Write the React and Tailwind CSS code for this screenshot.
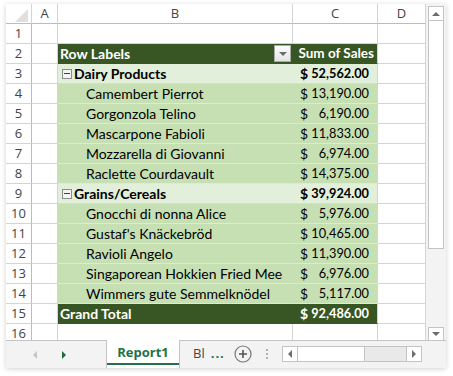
const rows = [
  { kind: 'head', label: 'Row Labels', value: 'Sum of Sales' },
  { kind: 'group', label: 'Dairy Products', value: '52,562.00' },
  { kind: 'item', label: 'Camembert Pierrot', value: '13,190.00' },
  { kind: 'item', label: 'Gorgonzola Telino', value: '6,190.00' },
  { kind: 'item', label: 'Mascarpone Fabioli', value: '11,833.00' },
  { kind: 'item', label: 'Mozzarella di Giovanni', value: '6,974.00' },
  { kind: 'item', label: 'Raclette Courdavault', value: '14,375.00' },
  { kind: 'group', label: 'Grains/Cereals', value: '39,924.00' },
  { kind: 'item', label: 'Gnocchi di nonna Alice', value: '5,976.00' },
  { kind: 'item', label: "Gustaf's Knäckebröd", value: '10,465.00' },
  { kind: 'item', label: 'Ravioli Angelo', value: '11,390.00' },
  { kind: 'item', label: 'Singaporean Hokkien Fried Mee', value: '6,976.00' },
  { kind: 'item', label: 'Wimmers gute Semmelknödel', value: '5,117.00' },
  { kind: 'total', label: 'Grand Total', value: '92,486.00' },
];

const rowBg = {
  head: 'bg-[#375623] text-white font-bold border-b-[#375623]',
  group: 'bg-[#e2efda] text-black font-bold border-b-[#d0e4c2]',
  item: 'bg-[#c6e0b4] text-black border-b-[#ddebd2]',
  total: 'bg-[#375623] text-white font-bold border-b-[#375623]',
};

const hdr = "font-['Open_Sans',sans-serif] text-[13px] text-[#444]";
const cellFont = "font-['Lato','Liberation_Sans',sans-serif] text-[14px] whitespace-nowrap";

function Tri({ dir, color = '#6d6d6d' }) {
  const pts = {
    up: '0,4 4,0 8,4',
    down: '0,0 8,0 4,4',
    left: '4,0 0,4 4,8',
    right: '0,0 4,4 0,8',
  }[dir];
  const vertical = dir === 'up' || dir === 'down';
  return (
    <svg width={vertical ? 8 : 4} height={vertical ? 4 : 8} viewBox={vertical ? '0 0 8 4' : '0 0 4 8'}>
      <polygon points={pts} fill={color} />
    </svg>
  );
}

function RowHead({ n }) {
  return (
    <div className={`flex h-5 items-center justify-center overflow-hidden border-b border-r border-[#d4d4d4] border-r-[#bcbcbc] ${hdr}`}>{n}</div>
  );
}

function Blank() {
  return <div className="h-5 border-b border-r border-[#d4d4d4]" />;
}

function Minus() {
  return (
    <span className="mr-[2px] inline-flex h-[10px] w-[10px] items-center justify-center border border-[#8c8c8c] bg-[#f4f4f4]">
      <span className="h-px w-[6px] bg-[#404040]" />
    </span>
  );
}

function PivotRow({ row, n }) {
  const bg = rowBg[row.kind];
  return (
    <>
      <RowHead n={n} />
      <Blank />
      <div className={`flex h-5 items-center border-b border-r border-r-transparent ${bg} ${cellFont}`}>
        {row.kind === 'group' && <span className="ml-1 flex items-center"><Minus /></span>}
        <span className={row.kind === 'item' ? 'pl-7' : row.kind === 'group' ? '' : 'pl-[2px]'}>{row.label}</span>
        {row.kind === 'head' && (
          <span className="ml-auto mr-px flex h-[17px] w-[17px] items-center justify-center border border-[#a9a9a9] bg-gradient-to-b from-[#fdfdfd] to-[#e4e4e4]">
            <Tri dir="down" />
          </span>
        )}
      </div>
      <div className={`flex h-5 items-center border-b border-r border-r-[#d4d4d4] ${bg} ${cellFont}`}>
        {row.kind === 'head' ? (
          <span className="ml-auto pr-[3px] text-[13.5px]">{row.value}</span>
        ) : (
          <>
            <span className="pl-[7px]">$</span>
            <span className="ml-auto pr-[8px] text-[12.75px]">{row.value}</span>
          </>
        )}
      </div>
      <Blank />
    </>
  );
}

function Grid() {
  return (
    <div className="grid h-[336px] grid-cols-[26px_26px_235px_85px_48px] content-start overflow-hidden">
      <div className="relative h-5 border-b border-r border-[#bcbcbc] border-r-[#d4d4d4]">
        <svg className="absolute left-[9px] top-[5px]" width="13" height="13" viewBox="0 0 13 13">
          <polygon points="13,0 13,13 0,13" fill="#dfdfdf" />
        </svg>
      </div>
      {['A', 'B', 'C', 'D'].map((c) => (
        <div key={c} className={`flex h-5 items-center justify-center border-b border-r border-[#bcbcbc] border-r-[#d4d4d4] ${hdr}`}>{c}</div>
      ))}
      <RowHead n={1} />
      <Blank />
      <Blank />
      <Blank />
      <Blank />
      {rows.map((row, i) => (
        <PivotRow key={row.label} row={row} n={i + 2} />
      ))}
      <RowHead n={16} />
      <Blank />
      <Blank />
      <Blank />
      <Blank />
    </div>
  );
}

function VScroll() {
  return (
    <div className="flex w-5 flex-col items-center bg-[#f3f3f3] pt-[2px]">
      <div className="flex h-[15px] w-[16px] items-center justify-center border border-[#c4c4c4] bg-white">
        <Tri dir="up" />
      </div>
      <div className="h-[228px] w-[16px] border border-t-0 border-[#c4c4c4] bg-white" />
      <div className="flex-1" />
      <div className="mb-[-1px] flex h-[14px] w-[16px] items-center justify-center border border-[#c4c4c4] bg-white">
        <Tri dir="down" />
      </div>
    </div>
  );
}

function TabBar() {
  return (
    <div className="flex h-[28px] items-start bg-[#f3f3f3]">
      <div className="flex h-full w-[100px] items-center border-t border-[#c4c4c4]">
        <span className="ml-[27px]"><Tri dir="left" color="#c6c6c6" /></span>
        <span className="ml-[25px]"><Tri dir="right" color="#1e6b3c" /></span>
      </div>
      <div className="flex h-full w-[74px] flex-col items-center border-x border-[#c4c4c4] bg-white">
        <span className="mt-[3px] font-['Open_Sans',sans-serif] text-[13px] font-bold text-[#217346]">Report1</span>
        <span className="mt-auto mb-[3px] h-[2px] w-full bg-[#217346]" />
      </div>
      <div className="flex h-full flex-1 items-center border-t border-[#c4c4c4] pb-[2px]">
        <span className="ml-[13px] font-['Open_Sans',sans-serif] text-[13px] text-[#444]">Bl</span>
        <span className="ml-[6px] font-['Open_Sans',sans-serif] text-[13px] font-bold tracking-[1px] text-[#217346]">...</span>
        <svg className="ml-[9px]" width="18" height="18" viewBox="0 0 18 18">
          <circle cx="9" cy="9" r="8" fill="none" stroke="#777" strokeWidth="1.2" />
          <path d="M9 5v8M5 9h8" stroke="#555" strokeWidth="1.6" />
        </svg>
        <span className="ml-[14px] flex flex-col gap-[2px]">
          <span className="h-[2px] w-[2px] bg-[#b0b0b0]" />
          <span className="h-[2px] w-[2px] bg-[#b0b0b0]" />
          <span className="h-[2px] w-[2px] bg-[#b0b0b0]" />
        </span>
        <div className="ml-[14px] flex h-[16px] w-[140px] border border-[#c4c4c4] bg-[#e9e9e9]">
          <div className="flex w-[15px] items-center justify-center border-r border-[#c4c4c4] bg-white">
            <Tri dir="left" />
          </div>
          <div className="w-[67px] border-r border-[#c4c4c4] bg-white" />
          <div className="flex-1" />
          <div className="flex w-[15px] items-center justify-center border-l border-[#c4c4c4] bg-white">
            <Tri dir="right" />
          </div>
        </div>
      </div>
    </div>
  );
}

export default function App() {
  return (
    <div className="h-[376px] w-[453px] bg-white pl-[6px] pt-[4px]">
      <div className="flex h-[364px] w-[440px] flex-col bg-white shadow-[0_1px_5px_rgba(0,0,0,0.18)]">
        <div className="flex">
          <Grid />
          <VScroll />
        </div>
        <TabBar />
      </div>
    </div>
  );
}
